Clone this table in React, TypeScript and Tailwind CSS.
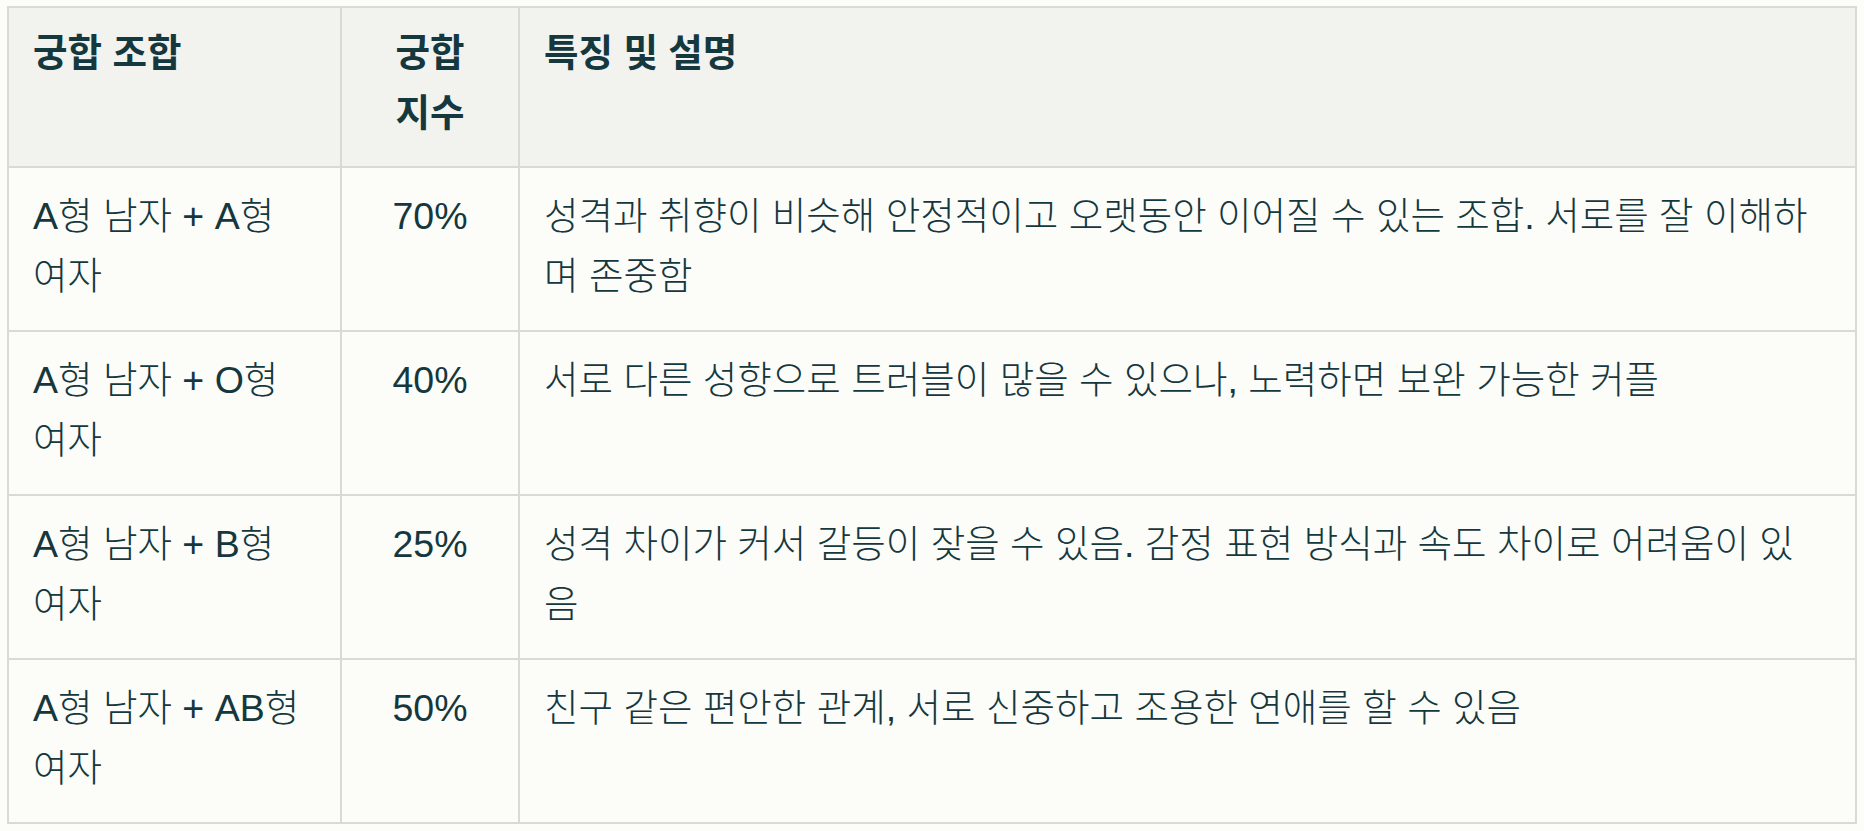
const rows = [
  {
    combo: "A형 남자 + A형 여자",
    score: "70%",
    desc: "성격과 취향이 비슷해 안정적이고 오랫동안 이어질 수 있는 조합. 서로를 잘 이해하며 존중함",
  },
  {
    combo: "A형 남자 + O형 여자",
    score: "40%",
    desc: "서로 다른 성향으로 트러블이 많을 수 있으나, 노력하면 보완 가능한 커플",
  },
  {
    combo: "A형 남자 + B형 여자",
    score: "25%",
    desc: "성격 차이가 커서 갈등이 잦을 수 있음. 감정 표현 방식과 속도 차이로 어려움이 있음",
  },
  {
    combo: "A형 남자 + AB형 여자",
    score: "50%",
    desc: "친구 같은 편안한 관계, 서로 신중하고 조용한 연애를 할 수 있음",
  },
];

export default function App() {
  return (
    <div className="min-h-screen bg-[#fcfcf8] px-[7px] pt-[6px] font-['Liberation_Sans','Noto_Sans_CJK_KR',sans-serif] text-[#15373e]">
      <table className="w-[1850px] table-fixed border-collapse border-2 border-[#dadad2] text-[37.5px] leading-[60px]">
        <colgroup>
          <col className="w-[333px]" />
          <col className="w-[178px]" />
          <col />
        </colgroup>
        <thead>
          <tr className="bg-[#f2f2ee]">
            <th className="border-2 border-[#dadad2] px-6 pt-[15px] pb-[23px] text-left align-top font-bold break-keep">
              궁합 조합
            </th>
            <th className="border-2 border-[#dadad2] px-6 pt-[15px] pb-[23px] text-center align-top font-bold break-keep">
              궁합 지수
            </th>
            <th className="border-2 border-[#dadad2] pl-6 pr-8 pt-[15px] pb-[23px] text-left align-top font-bold">
              특징 및 설명
            </th>
          </tr>
        </thead>
        <tbody>
          {rows.map((r) => (
            <tr key={r.score} className="bg-[#fcfcf8]">
              <td className="border-2 border-[#dadad2] px-6 pt-[18px] pb-[24px] align-top font-light break-keep">{r.combo}</td>
              <td className="border-2 border-[#dadad2] px-6 pt-[18px] pb-[24px] text-center align-top font-light">{r.score}</td>
              <td className="border-2 border-[#dadad2] pl-6 pr-8 pt-[18px] pb-[24px] align-top font-light">{r.desc}</td>
            </tr>
          ))}
        </tbody>
      </table>
    </div>
  );
}
